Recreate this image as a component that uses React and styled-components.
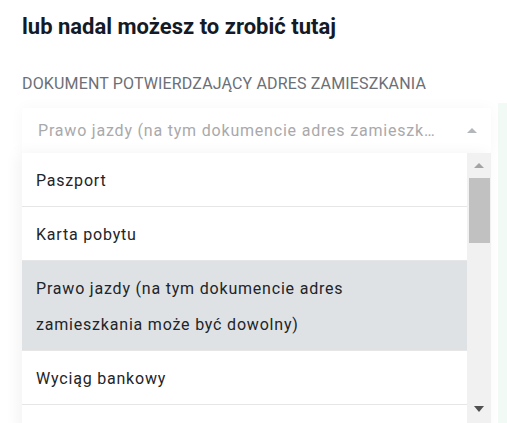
import React from 'react'
import styled, { createGlobalStyle } from 'styled-components'

const GlobalStyle = createGlobalStyle`
  html, body {
    margin: 0;
    padding: 0;
    background: #ffffff;
    font-family: Roboto, 'Liberation Sans', Arial, sans-serif;
    overflow: hidden;
  }
`

const Page = styled.div`
  display: flex;
  width: 507px;
  height: 423px;
  overflow: hidden;
`

const Main = styled.section`
  width: 498px;
  flex-shrink: 0;
  padding: 14px 7px 0 22px;
  box-sizing: border-box;
`

const SidePanel = styled.div`
  flex: 1;
  margin-top: 103px;
  background: #f1faf5;
`

const Title = styled.h2`
  margin: 0;
  font-size: 22px;
  line-height: 26px;
  font-weight: 700;
  color: #141a26;
`

const Label = styled.div`
  margin-top: 34px;
  font-size: 16px;
  line-height: 20px;
  letter-spacing: 0.15px;
  color: #6b6f77;
  text-transform: uppercase;
`

const Field = styled.div`
  position: relative;
  margin-top: 14px;
`

const SelectBox = styled.div`
  display: flex;
  align-items: center;
  justify-content: space-between;
  height: 45px;
  padding: 0 14px 0 16px;
  box-shadow: 0 0 14px rgba(0, 0, 0, 0.035);
`

const Placeholder = styled.span`
  font-size: 16px;
  letter-spacing: 0.8px;
  color: #a9a9ab;
  white-space: nowrap;
  overflow: hidden;
  text-overflow: ellipsis;
  max-width: 400px;
`

const Caret = styled.span`
  width: 0;
  height: 0;
  border-left: 5px solid transparent;
  border-right: 5px solid transparent;
  border-bottom: ${(p) => (p.$down ? '0' : '5px solid ' + p.$color)};
  border-top: ${(p) => (p.$down ? '6px solid ' + p.$color : '0')};
`

const Dropdown = styled.div`
  display: flex;
  height: 280px;
  background: #ffffff;
  box-shadow: -4px 0 14px rgba(0, 0, 0, 0.05);
`

const List = styled.ul`
  flex: 1;
  list-style: none;
  margin: 0;
  padding: 0;
  overflow: hidden;
`

const Option = styled.li`
  padding: 10px 24px 7px 14px;
  font-size: 16px;
  line-height: 36px;
  letter-spacing: 0.8px;
  color: #222428;
  background: ${(p) => (p.$active ? '#dee2e5' : '#ffffff')};
  border-bottom: 1px solid #e6e6e6;
`

const Scrollbar = styled.div`
  width: 24px;
  display: flex;
  flex-direction: column;
  align-items: center;
  background: #f1f1f1;
  padding-top: 10px;
  box-sizing: border-box;
`

const Thumb = styled.div`
  width: 21px;
  height: 65px;
  margin-top: 10px;
  background: #c1c1c1;
`

const Spacer = styled.div`
  flex: 1;
`

const BottomArrow = styled.div`
  height: 27px;
  display: flex;
  align-items: flex-start;
`

const options = [
  'Paszport',
  'Karta pobytu',
  'Prawo jazdy (na tym dokumencie adres zamieszkania może być dowolny)',
  'Wyciąg bankowy',
  'Rachunek za media'
]

export default function App() {
  return (
    <Page>
      <GlobalStyle />
      <Main>
        <Title>lub nadal możesz to zrobić tutaj</Title>
        <Label>Dokument potwierdzający adres zamieszkania</Label>
        <Field>
          <SelectBox>
            <Placeholder>
              Prawo jazdy (na tym dokumencie adres zamieszkania może być dowolny)
            </Placeholder>
            <Caret $color='#b3b6bb' />
          </SelectBox>
          <Dropdown>
            <List>
              {options.map((o, i) => (
                <Option key={o} $active={i === 2}>
                  {o}
                </Option>
              ))}
            </List>
            <Scrollbar>
              <Caret $color='#a3a3a3' />
              <Thumb />
              <Spacer />
              <BottomArrow>
                <Caret $down $color='#505050' />
              </BottomArrow>
            </Scrollbar>
          </Dropdown>
        </Field>
      </Main>
      <SidePanel />
    </Page>
  )
}
